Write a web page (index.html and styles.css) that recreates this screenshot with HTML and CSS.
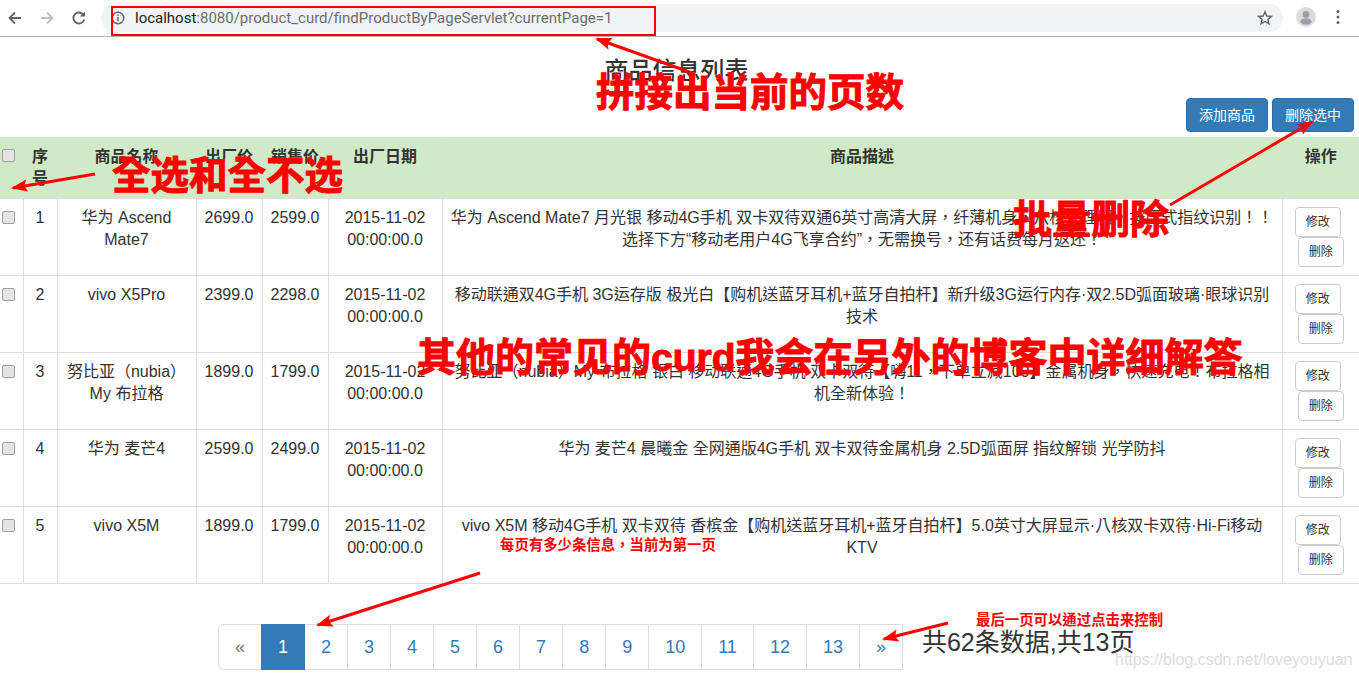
FILE: index.html
```html
<!DOCTYPE html>
<html lang="zh-Hant">
<head>
    <meta charset="UTF-8">
    <meta name="viewport" content="width=device-width, initial-scale=1.0">
    <title>商品信息列表</title>
    <link rel="stylesheet" href="styles.css">
</head>
<body>
    <div class="toolbar">
        <svg class="nav-icon" viewBox="0 0 16 16"><path d="M14 8H3M8 2.5 2.5 8 8 13.5" fill="none" stroke="#5f6368" stroke-width="1.8"/></svg>
        <svg class="nav-icon" viewBox="0 0 16 16"><path d="M2 8h11M8 2.5 13.5 8 8 13.5" fill="none" stroke="#bdc1c6" stroke-width="1.8"/></svg>
        <svg class="nav-icon" viewBox="0 0 16 16"><path d="M13.2 9.5A5.5 5.5 0 1 1 12 4.3" fill="none" stroke="#5f6368" stroke-width="1.8"/><path d="M14 1.5V6.5H9Z" fill="#5f6368"/></svg>
        <div class="address">
            <svg class="info-icon" viewBox="0 0 14 14"><circle cx="7" cy="7" r="5.8" fill="none" stroke="#5f6368" stroke-width="1.4"/><path d="M6.3 6h1.4v4.2H6.3zM6.3 3.6h1.4V5H6.3z" fill="#5f6368"/></svg>
            <span class="url"><b>localhost</b>:8080/product_curd/findProductByPageServlet?currentPage=1</span>
            <svg class="star-icon" viewBox="0 0 16 16"><path d="M8 1.8 9.8 6l4.6.4-3.5 3 1.1 4.5L8 11.5l-4 2.4 1.1-4.5-3.5-3L6.200 6Z" fill="none" stroke="#5f6368" stroke-width="1.4"/></svg>
        </div>
        <svg class="avatar" viewBox="0 0 20 20"><circle cx="10" cy="10" r="10" fill="#dadce0"/><circle cx="10" cy="7.500" r="3.400" fill="#9aa0a6"/><ellipse cx="10" cy="14.500" rx="5.600" ry="3.200" fill="#9aa0a6"/></svg>
        <svg class="menu-icon" viewBox="0 0 4 16"><circle cx="2" cy="2.500" r="1.500" fill="#5f6368"/><circle cx="2" cy="8" r="1.500" fill="#5f6368"/><circle cx="2" cy="13.500" r="1.500" fill="#5f6368"/></svg>
    </div>

    <h3 class="title">商品信息列表</h3>

    <div class="actions">
        <a class="btn btn-primary">添加商品</a>
        <a class="btn btn-primary">删除选中</a>
    </div>

    <table class="product-table">
        <colgroup>
            <col class="col-check"><col class="col-id"><col class="col-name"><col class="col-price"><col class="col-price">
            <col class="col-date"><col><col class="col-op">
        </colgroup>
        <thead>
            <tr>
                <th><input type="checkbox"></th>
                <th>序号</th>
                <th>商品名称</th>
                <th>出厂价</th>
                <th>销售价</th>
                <th>出厂日期</th>
                <th>商品描述</th>
                <th>操作</th>
            </tr>
        </thead>
        <tbody>
            <tr>
                <td><input type="checkbox"></td>
                <td>1</td>
                <td>华为 Ascend Mate7</td>
                <td>2699.0</td>
                <td>2599.0</td>
                <td>2015-11-02 00:00:00.0</td>
                <td>华为 Ascend Mate7 月光银 移动4G手机 双卡双待双通6英寸高清大屏，纤薄机身，八核处理器，按压式指纹识别！！选择下方“移动老用户4G飞享合约”，无需换号，还有话费每月返还！</td>
                <td><a class="btn btn-sm btn-edit">修改</a> <a class="btn btn-sm btn-del">删除</a></td>
            </tr>
            <tr>
                <td><input type="checkbox"></td>
                <td>2</td>
                <td>vivo X5Pro</td>
                <td>2399.0</td>
                <td>2298.0</td>
                <td>2015-11-02 00:00:00.0</td>
                <td>移动联通双4G手机 3G运存版 极光白【购机送蓝牙耳机+蓝牙自拍杆】新升级3G运行内存·双2.5D弧面玻璃·眼球识别技术</td>
                <td><a class="btn btn-sm btn-edit">修改</a> <a class="btn btn-sm btn-del">删除</a></td>
            </tr>
            <tr>
                <td><input type="checkbox"></td>
                <td>3</td>
                <td>努比亚（nubia）My 布拉格</td>
                <td>1899.0</td>
                <td>1799.0</td>
                <td>2015-11-02 00:00:00.0</td>
                <td>努比亚（nubia）My 布拉格 银白 移动联通4G手机 双卡双待【嗨11，下单立减100】金属机身，快速充电！布拉格相机全新体验！</td>
                <td><a class="btn btn-sm btn-edit">修改</a> <a class="btn btn-sm btn-del">删除</a></td>
            </tr>
            <tr>
                <td><input type="checkbox"></td>
                <td>4</td>
                <td>华为 麦芒4</td>
                <td>2599.0</td>
                <td>2499.0</td>
                <td>2015-11-02 00:00:00.0</td>
                <td>华为 麦芒4 晨曦金 全网通版4G手机 双卡双待金属机身 2.5D弧面屏 指纹解锁 光学防抖</td>
                <td><a class="btn btn-sm btn-edit">修改</a> <a class="btn btn-sm btn-del">删除</a></td>
            </tr>
            <tr>
                <td><input type="checkbox"></td>
                <td>5</td>
                <td>vivo X5M</td>
                <td>1899.0</td>
                <td>1799.0</td>
                <td>2015-11-02 00:00:00.0</td>
                <td>vivo X5M 移动4G手机 双卡双待 香槟金【购机送蓝牙耳机+蓝牙自拍杆】5.0英寸大屏显示·八核双卡双待·Hi-Fi移动KTV</td>
                <td><a class="btn btn-sm btn-edit">修改</a> <a class="btn btn-sm btn-del">删除</a></td>
            </tr>
        </tbody>
    </table>

    <div class="footer-bar">
        <ul class="pagination">
            <li><a class="muted">«</a></li>
            <li><a class="active">1</a></li>
            <li><a>2</a></li>
            <li><a>3</a></li>
            <li><a>4</a></li>
            <li><a>5</a></li>
            <li><a>6</a></li>
            <li><a>7</a></li>
            <li><a>8</a></li>
            <li><a>9</a></li>
            <li><a>10</a></li>
            <li><a>11</a></li>
            <li><a>12</a></li>
            <li><a>13</a></li>
            <li><a>»</a></li>
        </ul>
        <span class="total">共62条数据,共13页</span>
    </div>

    <!-- red annotations drawn over the screenshot -->
    <svg class="arrows" viewBox="0 0 1359 679">
        <defs>
            <marker id="head" viewBox="0 0 8 6" markerWidth="5.500" markerHeight="4.500" refX="7" refY="3" orient="auto" markerUnits="strokeWidth">
                <path d="M0 0 8 3 0 6 1.500 3Z" fill="#f00"/>
            </marker>
        </defs>
        <rect x="112" y="7" width="543" height="28" fill="none" stroke="#f00" stroke-width="2"/>
        <path d="M695 74 597 39" marker-end="url(#head)"/>
        <path d="M95 174 13 188" marker-end="url(#head)"/>
        <path d="M1170 205 1312 122" marker-end="url(#head)"/>
        <path d="M480 573 318 625" marker-end="url(#head)"/>
        <path d="M948 623 884 639" marker-end="url(#head)"/>
    </svg>
    <div class="note note-page">拼接出当前的页数</div>
    <div class="note note-all">全选和全不选</div>
    <div class="note note-batch">批量删除</div>
    <div class="note note-other">其他的常见的curd我会在另外的博客中详细解答</div>
    <div class="note-small note-size">每页有多少条信息，当前为第一页</div>
    <div class="note-small note-last">最后一页可以通过点击来控制</div>
    <div class="watermark">https://blog.csdn.net/loveyouyuan</div>
</body>
</html>
```

FILE: styles.css
```css
* {
    box-sizing: border-box;
}

body {
    margin: 0;
    height: 679px;
    position: relative;
    overflow: hidden;
    background-color: #fff;
    color: #333;
    font-family: "Liberation Sans", "Noto Sans CJK TC", sans-serif;
    font-size: 16px;
    line-height: 22px;
}

/* browser bar */
.toolbar {
    height: 37px;
    display: flex;
    align-items: flex-start;
    padding-top: 4px;
    border-bottom: 1px solid #b6b6b6;
}

.nav-icon {
    width: 16px;
    height: 16px;
    margin: 6px 0 0 7px;
    margin-right: 9px;
}

.address {
    width: 1182px;
    height: 28px;
    margin-left: 5px;
    padding: 0 10px;
    display: flex;
    align-items: center;
    background-color: #f1f3f4;
    border-radius: 14px;
    font-family: "Roboto", "Liberation Sans", sans-serif;
}

.info-icon {
    width: 14px;
    height: 14px;
    margin-right: 10px;
}

.url {
    flex: 1;
    font-size: 15px;
    color: #6a6e72;
}

.url b {
    font-weight: normal;
    color: #202124;
}

.star-icon {
    width: 16px;
    height: 16px;
}

.avatar {
    width: 20px;
    height: 20px;
    margin: 3px 0 0 13px;
}

.menu-icon {
    width: 4px;
    height: 16px;
    margin: 5px 0 0 20px;
}

/* page head */
.title {
    margin: 20px 6px 14px 0;
    text-align: center;
    font-size: 24px;
    font-weight: 500;
    line-height: 27px;
}

.actions {
    display: flex;
    justify-content: flex-end;
    gap: 4px;
    height: 39px;
    padding-right: 5px;
}

.btn {
    display: inline-block;
    padding: 6px 12px;
    border: 1px solid transparent;
    border-radius: 4px;
    font-size: 14px;
    line-height: 20px;
    height: 34px;
    white-space: nowrap;
}

.btn-primary {
    background-color: #337ab7;
    border-color: #2e6da4;
    color: #fff;
}

.btn-sm {
    padding: 5px 10px;
    height: 30px;
    font-size: 12px;
    line-height: 18px;
    background-color: #fff;
    border-color: #ccc;
    vertical-align: top;
}

.btn-edit {
    margin-right: 6px;
}

.btn-del {
    margin: 0 2px;
}

/* table */
.product-table {
    width: 1359px;
    table-layout: fixed;
    border-collapse: collapse;
}

.col-check {
    width: 23px;
}

.col-id {
    width: 34px;
}

.col-name {
    width: 139px;
}

.col-price {
    width: 66px;
}

.col-date {
    width: 114px;
}

.col-op {
    width: 77px;
}

.product-table th,
.product-table td {
    padding: 8px;
    border: 1px solid #ddd;
    text-align: center;
    vertical-align: top;
}

.product-table th {
    height: 61px;
    padding-top: 9px;
    background-color: #d0e9c6;
    border-top: 0;
    font-weight: bold;
    line-height: 22px;
}

.product-table td {
    height: 77px;
}

.product-table th:first-child,
.product-table td:first-child {
    padding: 9px 0 0 2px;
    border-left: 0;
    text-align: left;
}

.product-table th:last-child,
.product-table td:last-child {
    border-right: 0;
}

.product-table td:last-child {
    padding: 8px 0;
}

input[type="checkbox"] {
    appearance: none;
    display: block;
    width: 13px;
    height: 13px;
    margin: 3px 0 0;
    background-color: #e4e4e4;
    border: 1px solid #a0a0a0;
    border-radius: 2px;
}

/* pagination */
.footer-bar {
    display: flex;
    align-items: flex-start;
    padding: 40px 0 0 218px;
}

.pagination {
    display: flex;
    margin: 0;
    padding: 0;
    list-style: none;
}

.pagination a {
    display: block;
    height: 46px;
    margin-left: -1px;
    padding: 10px 16px;
    background-color: #fff;
    border: 1px solid #ddd;
    color: #337ab7;
    font-size: 18px;
    line-height: 24px;
}

.pagination li:first-child a {
    margin-left: 0;
    border-radius: 6px 0 0 6px;
}

.pagination a.muted {
    color: #777;
}

.pagination a.active {
    background-color: #337ab7;
    border-color: #337ab7;
    color: #fff;
    position: relative;
}

.total {
    margin: 5px 0 0 19px;
    font-size: 25px;
    line-height: 27px;
}

/* annotations */
.arrows {
    position: absolute;
    top: 0;
    left: 0;
    width: 1359px;
    height: 679px;
}

.arrows path {
    fill: none;
    stroke: #f00;
    stroke-width: 3;
}

.arrows marker path {
    fill: #f00;
    stroke: none;
}

.note,
.note-small {
    position: absolute;
    color: #f00;
    font-weight: bold;
    white-space: nowrap;
}

.note {
    font-size: 38.5px;
    line-height: 44px;
    -webkit-text-stroke: 1px #f00;
}

.note-page {
    left: 596px;
    top: 71px;
}

.note-all {
    left: 112px;
    top: 154px;
}

.note-batch {
    left: 1013px;
    top: 198px;
    font-size: 39px;
}

.note-other {
    left: 417px;
    top: 336px;
    font-size: 39px;
}

.note-small {
    font-size: 14.4px;
    line-height: 18px;
}

.note-size {
    left: 500px;
    top: 536px;
}

.note-last {
    left: 976px;
    top: 611px;
}

.watermark {
    position: absolute;
    left: 1115px;
    top: 649px;
    color: #dcdcdc;
    font-size: 16px;
    white-space: nowrap;
}
```
